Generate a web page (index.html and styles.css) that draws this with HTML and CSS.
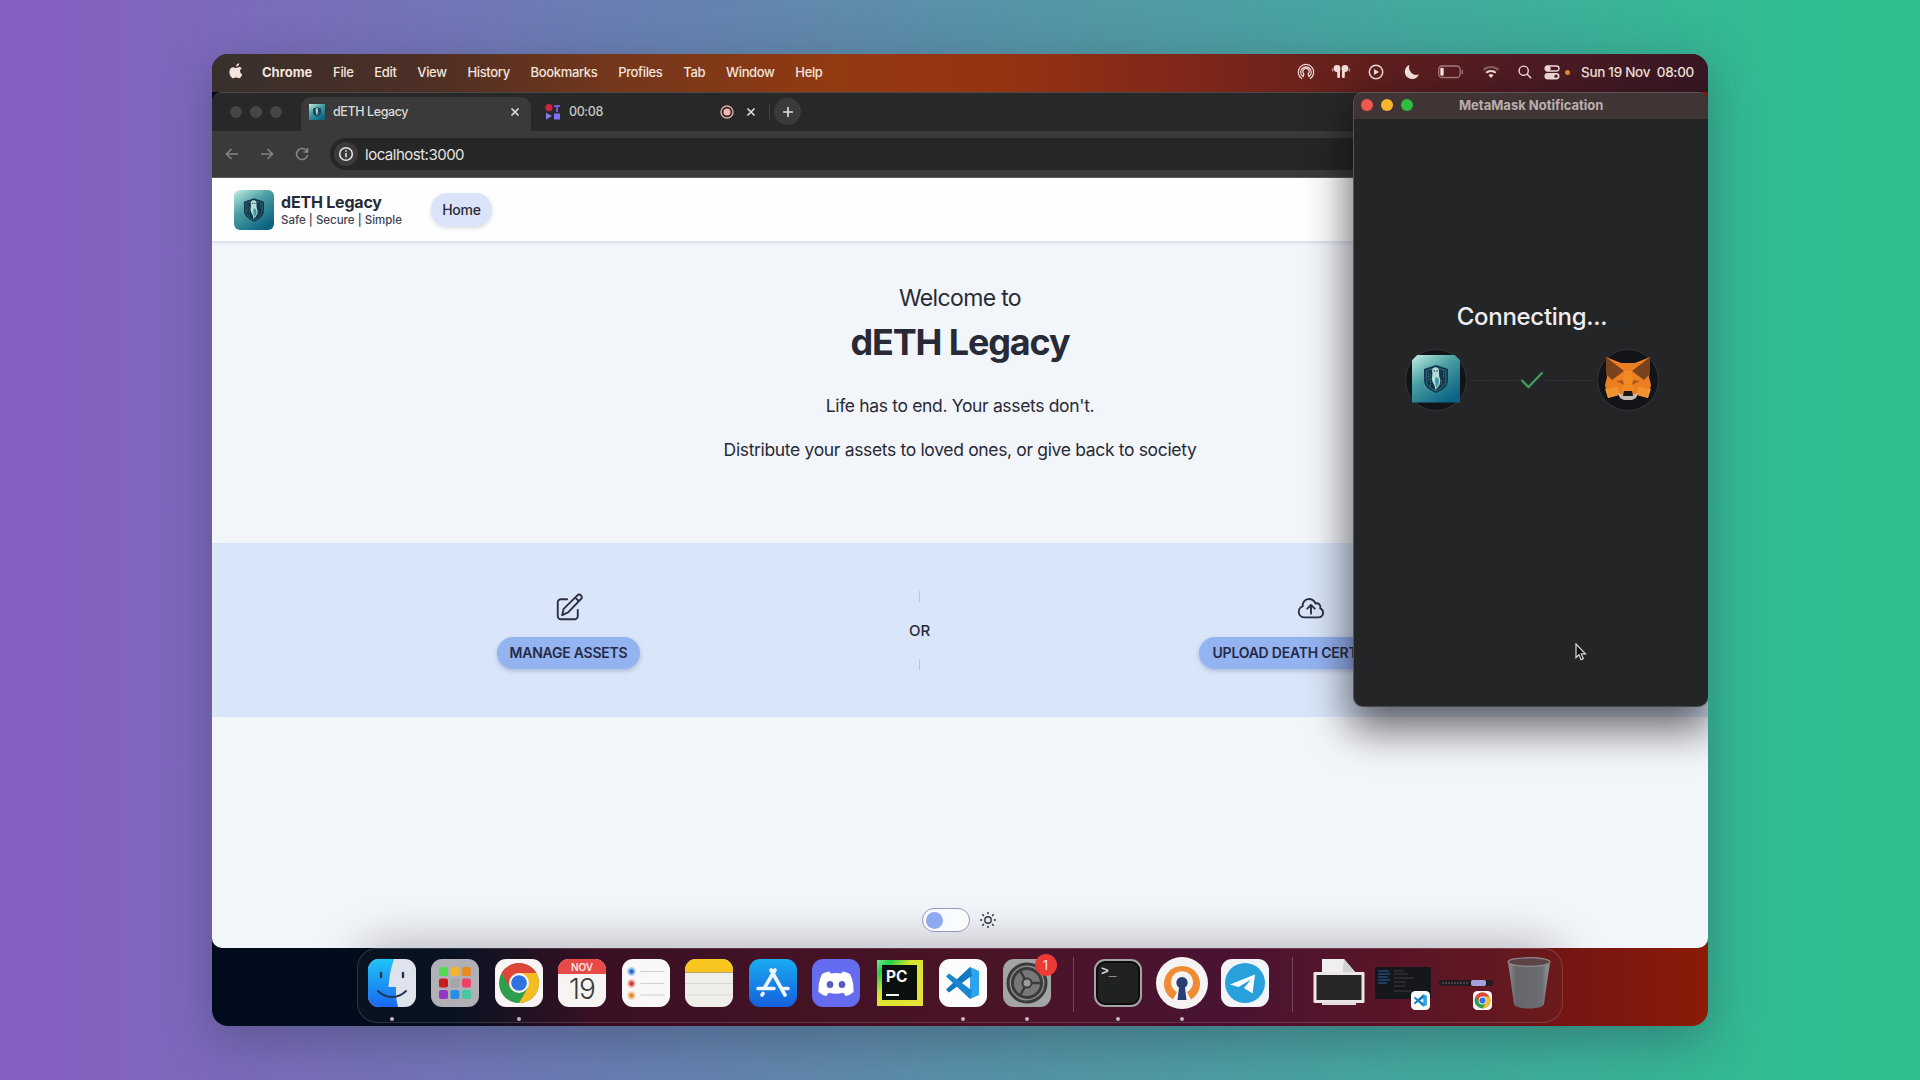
FILE: index.html
```html
<!DOCTYPE html>
<html lang="en">
<head>
  <meta charset="UTF-8" />
  <meta name="viewport" content="width=device-width, initial-scale=1.0"/>
  <title>dETH Legacy</title>
  <link rel="stylesheet" href="styles.css">
</head>
<body>
  <!-- Shared icons -->
  <svg class="sprite" aria-hidden="true">
    <defs>
      <linearGradient id="teal" x1="0" y1="0" x2="0.7" y2="1">
        <stop offset="0" stop-color="#c3efe4"/>
        <stop offset="0.45" stop-color="#4a9fa3"/>
        <stop offset="1" stop-color="#0c6384"/>
      </linearGradient>
      <linearGradient id="finder-blue" x1="0" y1="0" x2="0" y2="1">
        <stop offset="0" stop-color="#1fc4f8"/>
        <stop offset="1" stop-color="#1a68f0"/>
      </linearGradient>
      <linearGradient id="store-blue" x1="0" y1="0" x2="0" y2="1">
        <stop offset="0" stop-color="#1aabf2"/>
        <stop offset="1" stop-color="#1560dd"/>
      </linearGradient>
      <linearGradient id="trash-grey" x1="0" y1="0" x2="1" y2="0">
        <stop offset="0" stop-color="#8c8c8f"/>
        <stop offset="0.2" stop-color="#66676a"/>
        <stop offset="0.8" stop-color="#6c6d70"/>
        <stop offset="1" stop-color="#98999b"/>
      </linearGradient>
    </defs>
    <symbol id="shield" viewBox="0 0 48 48">
      <rect width="48" height="48" fill="url(#teal)"/>
      <path d="M24 10l12 4v11c0 6-5 10-12 13-7-3-12-7-12-13V14z" fill="#12364a"/>
      <path d="M24 12.500l9.800 3.300v9c0 5-4 8.500-9.800 11.200-5.800-2.700-9.800-6.200-9.800-11.200v-9z" fill="none" stroke="#3f7f8c" stroke-width="0.800"/>
      <path d="M16.500 18v8M18.500 20v11M31.500 17v5M29.500 25v6" stroke="#39717f" stroke-width="0.900" stroke-dasharray="2 1"/>
      <path d="M20 16c0-5 7-5 7 0 0 3 0 5 1 8 1 4-1 8-5 11 1-4-2-6-3-10-.5-3 1-5 0-9z" fill="#b5dcd8"/>
      <path d="M24 22c4 1 4 7 0 11 0-4-2-7 0-11z" fill="#3e98a3"/>
      <circle cx="22.300" cy="16" r="0.800" fill="#12364a"/><circle cx="25" cy="16" r="0.800" fill="#12364a"/>
    </symbol>
    <symbol id="chrome" viewBox="0 0 48 48">
      <rect width="48" height="48" rx="11" fill="#faf5f4"/>
      <circle cx="24" cy="24" r="20" fill="#2f9e4c"/>
      <path d="M6.700 14A20 20 0 0 1 41.300 14H24L15.300 29z" fill="#e0453a"/>
      <path d="M41.300 14A20 20 0 0 1 24 44L32.700 29 24 14z" fill="#f6bd22"/>
      <circle cx="24" cy="24" r="10" fill="#f5f5f5"/>
      <circle cx="24" cy="24" r="7.800" fill="#2f72e0"/>
    </symbol>
    <symbol id="vscode" viewBox="0 0 48 48">
      <rect width="48" height="48" rx="11" fill="#fcfcfd"/>
      <path d="M31 8l9 4v24l-9 4z" fill="#2ca3ec"/>
      <path d="M31 8L7 30.500l3 3L33 16.500z" fill="#1277bd"/>
      <path d="M7 17.500l3-3L33 31.500 31 40z" fill="#1a86cf"/>
    </symbol>
  </svg>

  <div class="screen">
    <div class="menubar">
      <svg class="apple" viewBox="0 0 14 17"><path d="M10.200.3c.1 1.600-1.300 3.200-3 3.200C7 2 8.600.4 10.200.3zM12.600 5.600c-2.300 1.400-1.900 4.700.6 5.700-.6 1.900-1.900 4-3.300 4-1.100 0-1.500-.7-2.800-.7s-1.700.7-2.700.7C2.300 15.300.4 11.700.4 8.900c0-3 1.900-4.700 3.900-4.700 1.200 0 2 .8 2.900.8.900 0 1.900-.9 3.300-.9.9 0 1.700.5 2.100 1.500z"/></svg>
      <span class="menu app-name">Chrome</span>
      <span class="menu">File</span>
      <span class="menu">Edit</span>
      <span class="menu">View</span>
      <span class="menu">History</span>
      <span class="menu">Bookmarks</span>
      <span class="menu">Profiles</span>
      <span class="menu">Tab</span>
      <span class="menu">Window</span>
      <span class="menu">Help</span>
      <div class="status">
        <svg class="s-vpn" width="18" height="18" viewBox="0 0 18 18"><path d="M5 15.700a7.700 7.700 0 1 1 8 0M6 13.500l.9-2.600a3.200 3.200 0 1 1 4.200 0l.9 2.600a5.300 5.300 0 1 0-6 0z" stroke-width="1.200"/></svg>
        <svg class="s-pods" width="20" height="16" viewBox="0 0 20 16"><g fill="#f2dcd8" stroke="none"><circle cx="6" cy="4.500" r="3.400"/><circle cx="14" cy="4.500" r="3.400"/><rect x="6.200" y="4" width="2.800" height="10" rx="1.200"/><rect x="11" y="4" width="2.800" height="10" rx="1.200"/></g><path d="M1.500 4.500v3M18.500 4.500v3" opacity="0.600"/></svg>
        <svg class="s-play" width="16" height="16" viewBox="0 0 16 16"><circle cx="8" cy="8" r="6.700" stroke-width="1.500"/><path d="M6 5l5 3-5 3z" fill="#f2dcd8" stroke="none"/></svg>
        <svg class="s-moon" width="16" height="16" viewBox="0 0 16 16"><path d="M5.500 1A7.300 7.300 0 1 0 15 10.300 7.300 7.300 0 0 1 5.500 1z" fill="#f8e4e0" stroke="none"/></svg>
        <svg class="s-batt" width="26" height="14" viewBox="0 0 26 14"><rect x="0.700" y="1" width="21.500" height="11.500" rx="3.500" opacity="0.500"/><rect x="2.300" y="2.800" width="3.400" height="8" rx="1.300" fill="#f8e4e0" stroke="none"/><path d="M24.300 5v4" opacity="0.500"/></svg>
        <svg class="s-wifi" width="18" height="14" viewBox="0 0 18 14"><path d="M1.500 5a10.800 10.800 0 0 1 15 0" opacity="0.350" stroke-width="2"/><path d="M4.200 7.800a7 7 0 0 1 9.600 0" stroke-width="2"/><path d="M9 13l-2.500-2.700a3.500 3.500 0 0 1 5 0z" fill="#f2dcd8" stroke="none"/></svg>
        <svg class="s-search" width="14" height="14" viewBox="0 0 14 14"><circle cx="5.700" cy="5.700" r="4.600" stroke-width="1.400"/><path d="M9.200 9.200l4 4" stroke-width="1.600"/></svg>
        <svg class="s-ctl" width="16" height="15" viewBox="0 0 16 15"><rect x="1" y="1" width="14" height="5" rx="2.500"/><circle cx="4" cy="3.500" r="2" fill="#f2dcd8"/><rect x="0.500" y="8" width="15" height="6.500" rx="3.200" fill="#f2dcd8" stroke="none"/><circle cx="12" cy="11.200" r="1.600" fill="#501d20" stroke="none"/></svg>
        <span class="mic-dot"></span>
        <span class="clock">Sun 19 Nov&nbsp; 08:00</span>
      </div>
    </div>

    <div class="browser">
      <div class="tabstrip">
        <div class="lights"><span></span><span></span><span></span></div>
        <div class="tab active">
          <svg class="favicon" width="16" height="16"><use href="#shield"/></svg>
          <span class="tab-title">dETH Legacy</span>
          <svg class="close" width="10" height="10" viewBox="0 0 10 10"><path d="M1.500 1.500l7 7M8.500 1.500l-7 7"/></svg>
        </div>
        <div class="tab">
          <svg class="favicon" width="16" height="16" viewBox="0 0 16 16"><circle cx="4" cy="3.600" r="3.600" fill="#cf2440"/><path d="M9 1h6v2h-2v5h-2V3H9z" fill="#6d5fd0"/><path d="M1 8.800l6 3.300-6 3.400z" fill="#8a7df0"/><rect x="9" y="9.500" width="6" height="6" fill="#7d70f2"/></svg>
          <span class="tab-title">00:08</span>
          <svg class="rec" width="14" height="14" viewBox="0 0 14 14"><circle cx="7" cy="7" r="6" fill="none" stroke="#e0aaa8" stroke-width="1.400"/><circle cx="7" cy="7" r="3.600" fill="#f3b7b3"/></svg>
          <svg class="close" width="10" height="10" viewBox="0 0 10 10"><path d="M1.500 1.500l7 7M8.500 1.500l-7 7"/></svg>
        </div>
        <span class="tab-sep"></span>
        <div class="new-tab"><svg width="12" height="12" viewBox="0 0 12 12"><path d="M6 1v10M1 6h10"/></svg></div>
      </div>
      <div class="toolbar">
        <svg width="14" height="14" viewBox="0 0 14 14"><path d="M13 7H1.500M6.500 2l-5 5 5 5"/></svg>
        <svg width="14" height="14" viewBox="0 0 14 14"><path d="M1 7h11.500M7.500 2l5 5-5 5"/></svg>
        <svg width="14" height="14" viewBox="0 0 14 14"><path d="M12 4.500A5.500 5.500 0 1 0 12.500 8M12.500 1v4h-4"/></svg>
        <div class="omnibox">
          <span class="site-info"><svg width="16" height="16" viewBox="0 0 16 16"><circle cx="8" cy="8" r="6.300"/><path d="M8 7v4.300M8 4.300v1.500"/></svg></span>
          <span>localhost:3000</span>
        </div>
      </div>

      <div class="page">
        <header class="site-header">
          <svg class="logo" width="40" height="40"><use href="#shield"/></svg>
          <div class="brand">
            <div class="brand-name">dETH Legacy</div>
            <div class="brand-tag">Safe | Secure | Simple</div>
          </div>
          <a class="nav-home">Home</a>
        </header>

        <section class="hero">
          <div class="welcome">Welcome to</div>
          <h1>dETH Legacy</h1>
          <p class="line-one">Life has to end. Your assets don't.</p>
          <p class="line-two">Distribute your assets to loved ones, or give back to society</p>
        </section>

        <section class="actions">
          <div class="action">
            <svg width="30" height="30" viewBox="0 0 24 24"><path d="M10.500 5H5.500A2.500 2.500 0 0 0 3 7.500v11A2.500 2.500 0 0 0 5.500 21h11a2.500 2.500 0 0 0 2.500-2.500v-5M6.500 17.700l1.200-5L18.700 1.900a1.900 1.900 0 0 1 2.900 0 1.900 1.900 0 0 1 0 2.900L11.300 15.500zM17 3.700l2.900 2.900"/></svg>
            <button class="btn">MANAGE ASSETS</button>
          </div>
          <div class="divider"><span class="bar"></span><span>OR</span><span class="bar"></span></div>
          <div class="action">
            <svg width="30" height="30" viewBox="0 0 24 24"><path d="M12 16.500V9.700M9 12.500l3-3 3 3M6.750 19.500a4.500 4.500 0 0 1-1.400-8.800 5.250 5.250 0 0 1 10.200-2.300 3 3 0 0 1 3.800 3.900A3.750 3.750 0 0 1 18 19.500z"/></svg>
            <button class="btn">UPLOAD DEATH CERTIFICATE</button>
          </div>
        </section>

        <footer class="theme-switch">
          <span class="toggle"><span class="knob"></span></span>
          <svg width="18" height="18" viewBox="0 0 18 18"><circle cx="9" cy="9" r="3.200"/><path d="M9 1v2.200M9 14.800V17M1 9h2.200M14.800 9H17M3.300 3.300l1.600 1.600M13.100 13.100l1.600 1.600M3.300 14.700l1.600-1.600M13.100 4.900l1.600-1.600"/></svg>
        </footer>
        <div class="dock-shade"></div>
      </div>
    </div>

    <div class="dock">
      <div class="app running">
        <svg viewBox="0 0 48 48"><rect width="48" height="48" rx="11" fill="#dfe3ec"/><path d="M11 0h15c-3 9-5 18-5.500 28H28c-.3 7 .4 14 2 20H11A11 11 0 0 1 0 37V11A11 11 0 0 1 11 0z" fill="url(#finder-blue)"/><path d="M13 14v4M35 14v4" stroke="#20344f" stroke-width="2.400" stroke-linecap="round"/><path d="M10 32c8 8 20 8 28 0" fill="none" stroke="#20344f" stroke-width="1.800" stroke-linecap="round"/></svg>
      </div>
      <div class="app">
        <svg viewBox="0 0 48 48"><rect width="48" height="48" rx="11" fill="#b1b0b7"/><rect x="8" y="8" width="9" height="9" rx="2" fill="#52dd50"/><rect x="19.500" y="8" width="9" height="9" rx="2" fill="#f3b32b"/><rect x="31" y="8" width="9" height="9" rx="2" fill="#ea8a25"/><rect x="8" y="19.500" width="9" height="9" rx="2" fill="#c71c1c"/><rect x="19.500" y="19.500" width="9" height="9" rx="2" fill="#a5a5a8"/><rect x="31" y="19.500" width="9" height="9" rx="2" fill="#ef4168"/><rect x="8" y="31" width="9" height="9" rx="2" fill="#9137c4"/><rect x="19.500" y="31" width="9" height="9" rx="2" fill="#2490e8"/><rect x="31" y="31" width="9" height="9" rx="2" fill="#46c79d"/></svg>
      </div>
      <div class="app running"><svg><use href="#chrome"/></svg></div>
      <div class="app calendar"><div class="month">NOV</div><div class="day">19</div></div>
      <div class="app">
        <svg viewBox="0 0 48 48"><rect width="48" height="48" rx="11" fill="#f9f8f7"/><path d="M18.500 12.500h24M18.500 24.500h24M18.500 36h24" stroke="#cfcfcd" stroke-width="1"/><g stroke-width="2"><circle cx="9.500" cy="12.500" r="3.200" fill="#2f66b8" stroke="#9cc5f7"/><circle cx="9.500" cy="24.500" r="3.200" fill="#c53a3a" stroke="#f3b1ae"/><circle cx="9.500" cy="36.500" r="3.200" fill="#d78a32" stroke="#f4cfa5"/></g></svg>
      </div>
      <div class="app">
        <svg viewBox="0 0 48 48"><rect width="48" height="48" rx="11" fill="#efeeea"/><path d="M0 13V11A11 11 0 0 1 11 0h26a11 11 0 0 1 11 11v2z" fill="#f8c61e"/><path d="M0 13.500h48" stroke="#b7a467" stroke-width="1"/><path d="M0 24.500h48M0 36h48" stroke="#d8d8d4" stroke-width="1"/></svg>
      </div>
      <div class="app">
        <svg viewBox="0 0 48 48"><rect width="48" height="48" rx="11" fill="url(#store-blue)"/><g stroke="#eef6ff" stroke-width="3.600" stroke-linecap="round"><path d="M26 11L16 28M22 11l14 25M9 29.500h16M33 29.500h6M14 34.500l-1 1.500"/></g></svg>
      </div>
      <div class="app">
        <svg viewBox="0 0 48 48"><rect width="48" height="48" rx="11" fill="#656cf0"/><path d="M17 12.500l2 2q5-1 10 0l2-2q4 .5 7 2.500 4 8 3.500 18-4 3.500-8 4l-2-3.300q-7.500 2-15 0l-2 3.300q-4-.5-8-4-.5-10 3.500-18 3-2 7-2.500z" fill="#fff"/><ellipse cx="18" cy="25.500" rx="3.300" ry="3.600" fill="#555cc4"/><ellipse cx="30" cy="25.500" rx="3.300" ry="3.600" fill="#555cc4"/></svg>
      </div>
      <div class="app pycharm"><div class="py-inner"><span>PC</span><i></i></div></div>
      <div class="app running"><svg><use href="#vscode"/></svg></div>
      <div class="app running">
        <svg viewBox="0 0 48 48"><rect width="48" height="48" rx="11" fill="#a3a4a4"/><circle cx="24" cy="24" r="19" fill="#8b8b8b" stroke="#3a3b3d" stroke-width="3"/><circle cx="24" cy="24" r="14.500" fill="#777" stroke="#3a3b3d" stroke-width="3"/><path d="M24 24h14M24 24l-7-12.500M24 24l-7 12.500" stroke="#3a3b3d" stroke-width="2.500"/><circle cx="24" cy="24" r="4.500" fill="#9b9b9b" stroke="#3a3b3d" stroke-width="2"/></svg>
        <span class="badge">1</span>
      </div>
      <span class="sep"></span>
      <div class="app running terminal"><span>&gt;_</span></div>
      <div class="app running">
        <svg class="vpn" viewBox="0 0 52 52"><circle cx="26" cy="26" r="26" fill="#f6f3f3"/><path d="M17 42.500A18 18 0 1 1 35 42.500l-4-7.500a11 11 0 1 0-10 0z" fill="#ef8b33"/><path d="M21.500 43l1.500-12.500a5.700 5.700 0 1 1 6 0L30.500 43z" fill="#2a3d77"/></svg>
      </div>
      <div class="app">
        <svg viewBox="0 0 48 48"><rect width="48" height="48" rx="11" fill="#f3f4f7"/><circle cx="24" cy="24" r="20" fill="#28a0dc"/><path d="M9 25.500L34 15.500l-2.500 19-8.500-5.500 7-8.500-12.500 7.500z" fill="#fff"/></svg>
      </div>
      <span class="sep"></span>
      <div class="mini printer">
        <svg width="52" height="48" viewBox="0 0 52 48"><path d="M9 0h22l11 13v5H9z" fill="#efefef"/><path d="M31 0l-1.500 13H42z" fill="#d2d2d2"/><rect x="0.500" y="13" width="51" height="31" rx="1" fill="#ece6e8"/><rect x="3.500" y="16" width="45" height="25" fill="#262624"/><rect x="9" y="43" width="34" height="3" fill="#e4dcdf"/></svg>
      </div>
      <div class="mini thumb">
        <svg width="56" height="32" viewBox="0 0 56 32"><rect width="56" height="32" rx="1" fill="#15171b"/><path d="M3 4h11M3 7h12M3 10h10M3 13h12M3 16h9" stroke="#24477c" stroke-width="1.500"/><path d="M19 4h10M19 7h14M19 11h20M19 15h12M19 19h11M19 24h18" stroke="#3c3f46" stroke-width="1"/></svg>
        <svg class="corner"><use href="#vscode"/></svg>
      </div>
      <div class="mini thumb bar-thumb">
        <svg width="54" height="6" viewBox="0 0 54 6"><rect width="54" height="6" rx="2" fill="#231c22"/><path d="M3 3h27" stroke="#71636b" stroke-width="1" stroke-dasharray="2 1"/><rect x="32" width="15" height="6" rx="2" fill="#a5a1dd"/></svg>
        <svg class="corner"><use href="#chrome"/></svg>
      </div>
      <div class="mini trash">
        <svg width="44" height="52" viewBox="0 0 44 52"><path d="M1 5l6 42c1 6 29 6 30 0l6-42z" fill="url(#trash-grey)"/><ellipse cx="22" cy="5" rx="21" ry="4.300" fill="#5c4448" stroke="#8f8b8d" stroke-width="1.200"/></svg>
      </div>
    </div>

    <div class="metamask">
      <div class="mm-title">
        <div class="mm-lights"><span class="red"></span><span class="yellow"></span><span class="green"></span></div>
        <span class="mm-name">MetaMask Notification</span>
      </div>
      <div class="mm-body">
        <div class="connecting">Connecting...</div>
        <div class="mm-row">
          <div class="circle"><svg class="site" width="48" height="48"><use href="#shield"/></svg></div>
          <span class="dash"></span>
          <svg class="check" width="24" height="18" viewBox="0 0 24 18"><path d="M1.500 9l7 7L22.500 1.500" fill="none" stroke="#3f9b57" stroke-width="2.400"/></svg>
          <span class="dash"></span>
          <div class="circle">
            <svg width="48" height="46" viewBox="0 0 48 46">
              <path d="M2 1l15 6h14L46 1l-1 20 2 8-3 13-11-3-4 4H19l-4-4-11 3L1 29l2-8z" fill="#ec7f22"/>
              <path d="M2 1l18 14-12 9-6-6zM46 1L28 15l12 9 6-6z" fill="#7a411d"/>
              <path d="M20 15h8l2 20H18z" fill="#f28a22"/>
              <path d="M12 25l7-1 1 5zM36 25l-7-1-1 5z" fill="#b0561f"/>
              <path d="M1 33l13-2 1 8-11 3zM47 33l-13-2-1 8 11 3z" fill="#ef9330"/>
              <path d="M14 37l6 2h8l6-2-2 5-4 2h-8l-4-2z" fill="#c7bbb2"/>
              <path d="M20 35h8l1 5H19z" fill="#15171b"/>
            </svg>
          </div>
        </div>
      </div>
    </div>

    <svg class="cursor" width="12" height="19" viewBox="0 0 12 19"><path d="M1 1v13.500l3-2.800 2 5 2.300-1-2-4.800h4.200z" fill="#111" stroke="#dcdcdc" stroke-width="1.200"/></svg>
  </div>
</body>
</html>
```
FILE: styles.css
```css
* {
  margin: 0;
  padding: 0;
  box-sizing: border-box;
}

body {
  width: 1920px;
  height: 1080px;
  overflow: hidden;
  padding: 54px 212px;
  background: linear-gradient(90deg, #8561c1 3%, #2ebf91 96%);
  font-family: 'Inter', 'Liberation Sans', sans-serif;
}

.sprite {
  position: absolute;
  width: 0;
  height: 0;
}

.screen {
  position: relative;
  display: flex;
  flex-direction: column;
  width: 1496px;
  height: 972px;
  border-radius: 16px;
  overflow: hidden;
  background: linear-gradient(90deg, #000c1b 0, #000c1b 16%, #3b0a20 26%, #4c0e22 50%, #4c0d30 68%, #67121c 85%, #8c1b06 100%);
}

body::before {
  content: '';
  position: absolute;
  left: 212px;
  top: 54px;
  width: 1496px;
  height: 972px;
  border-radius: 16px;
  box-shadow: 0 14px 50px rgba(40, 50, 70, 0.38);
}

/* Menu bar */
.menubar {
  display: flex;
  align-items: center;
  height: 38px;
  padding: 0 14px 2px 17px;
  background: linear-gradient(90deg, #38302c 0, #4d2f25 14%, #74371c 27%, #933a11 42%, #963311 52%, #80271a 65%, #5f1f1e 78%, #4b1b25 90%, #371823 100%);
  color: #f3e4dc;
  font-size: 14px;
}

.apple {
  width: 14px;
  height: 17px;
  margin-right: 19px;
  margin-top: -2px;
  fill: #f3e4dc;
}

.menu {
  font-size: 13px;
  font-weight: 500;
  letter-spacing: -0.35px;
  margin-right: 20.8px;
}

.app-name {
  font-weight: 700;
  letter-spacing: 0;
}

.status {
  display: flex;
  align-items: center;
  margin-left: auto;
}

.status svg {
  fill: none;
  stroke: #f2dcd8;
  stroke-width: 1.3;
}

.s-vpn { margin-right: 16px; }
.s-pods { margin-right: 17px; }
.s-play { margin-right: 20px; }
.s-moon { margin-right: 18px; }
.s-batt { margin-right: 18px; }
.s-wifi { margin-right: 18px; }
.s-search { margin-right: 12px; }
.s-ctl { margin-right: 5px; }

.mic-dot {
  width: 5px;
  height: 5px;
  border-radius: 50%;
  background: #e58b26;
  margin-right: 11px;
}

.clock {
  font-size: 13.5px;
  font-weight: 500;
  letter-spacing: -0.3px;
  width: 113px;
  white-space: nowrap;
}

/* Browser */
.browser {
  display: flex;
  flex-direction: column;
  height: 856px;
  border-radius: 10px;
  overflow: hidden;
  border-top: 1px solid #4c4a48;
  background: #393a39;
}

.tabstrip {
  display: flex;
  align-items: flex-end;
  height: 38px;
  background: #272827;
  padding-left: 18px;
}

.lights {
  display: flex;
  gap: 8px;
  width: 71px;
  padding-bottom: 13px;
}

.lights span {
  width: 12px;
  height: 12px;
  border-radius: 50%;
  background: #454645;
}

.tab {
  display: flex;
  align-items: center;
  width: 230px;
  height: 34px;
  padding: 0 11px 5px 8px;
  color: #c6c6c4;
}

.tab.active {
  background: #393a39;
  border-radius: 10px 10px 0 0;
  color: #dcdcda;
}

.tab-title {
  margin-left: 8px;
  font-weight: 500;
  font-size: 12.5px;
  letter-spacing: -0.4px;
}

.tab .close {
  margin-left: auto;
}

.rec {
  margin-left: auto;
}

.tab .rec + .close {
  margin-left: 12px;
}

.tab + .tab {
  width: 228px;
  padding-left: 14px;
  padding-right: 3px;
}

.close path,
.new-tab path {
  fill: none;
  stroke: #dcdcda;
  stroke-width: 1.7;
}

.tab-sep {
  width: 1px;
  height: 16px;
  margin: 0 4px 11px 10px;
  background: #40413f;
}

.new-tab {
  display: flex;
  align-items: center;
  justify-content: center;
  width: 27px;
  height: 27px;
  margin-bottom: 6px;
  border-radius: 50%;
  background: #393a39;
}

.toolbar {
  display: flex;
  align-items: center;
  height: 47px;
  padding: 0 0 0 13px;
  border-bottom: 1px solid #555654;
}

.toolbar > svg {
  fill: none;
  stroke: #848583;
  stroke-width: 1.6;
  margin-right: 21px;
}

.omnibox {
  display: flex;
  align-items: center;
  flex: 1;
  height: 32px;
  padding-left: 4px;
  border-radius: 16px 0 0 16px;
  background: #252625;
  color: #e4e4e2;
  font-size: 15px;
  letter-spacing: -0.5px;
  gap: 7px;
}

.site-info {
  display: flex;
  align-items: center;
  justify-content: center;
  width: 24px;
  height: 24px;
  border-radius: 50%;
  background: #393a39;
}

.site-info svg {
  fill: none;
  stroke: #e4e4e2;
  stroke-width: 1.6;
}

/* Page */
.page {
  position: relative;
  display: flex;
  flex-direction: column;
  flex: 1;
  background: #f2f5f9;
  color: #282a37;
}

.site-header {
  display: flex;
  align-items: center;
  height: 64px;
  padding-left: 22px;
  background: #fdfefd;
  border-bottom: 1px solid #e0e2f3;
  box-shadow: 0 1px 3px rgba(150, 155, 220, 0.3);
}

.logo {
  border-radius: 6px;
}

.brand {
  margin-left: 7px;
  padding-top: 2px;
  width: 122px;
  white-space: nowrap;
}

.brand-name {
  font-size: 16px;
  font-weight: 700;
  line-height: 18px;
  letter-spacing: -0.2px;
}

.brand-tag {
  font-size: 11.5px;
  line-height: 18px;
  font-weight: 500;
  color: #414350;
}

.nav-home {
  margin-left: 28px;
  width: 61px;
  height: 33px;
  border-radius: 17px;
  background: #dbe3f8;
  box-shadow: 0 2px 4px rgba(80, 90, 140, 0.22);
  font-size: 14px;
  font-weight: 500;
  letter-spacing: -0.2px;
  line-height: 33px;
  text-align: center;
}

.hero {
  height: 301px;
  padding-top: 41px;
  text-align: center;
}

.welcome {
  font-size: 23px;
  line-height: 30px;
  letter-spacing: -0.65px;
}

.hero h1 {
  margin-top: 7px;
  font-size: 36px;
  line-height: 44px;
  letter-spacing: -1.15px;
}

.hero p {
  font-size: 17.5px;
  line-height: 28px;
  letter-spacing: -0.34px;
}

.hero .line-one {
  margin-top: 28px;
}

.hero .line-two {
  margin-top: 16px;
}

.actions {
  display: flex;
  align-items: center;
  justify-content: space-between;
  height: 174px;
  padding: 0 286px 0 285px;
  background: #d9e5f8;
}

.action {
  display: flex;
  flex-direction: column;
  align-items: center;
  gap: 14px;
  padding-top: 1px;
}

.action:first-child {
  width: 143px;
}

.action:last-child {
  width: 223px;
}

.action svg {
  fill: none;
  stroke: #2b2f40;
  stroke-width: 1.5;
  stroke-linecap: round;
  stroke-linejoin: round;
}

.btn {
  width: 100%;
  height: 32px;
  border: none;
  border-radius: 16px;
  background: #94b3f1;
  box-shadow: 0 2px 4px rgba(70, 90, 150, 0.3);
  color: #252b45;
  font-family: inherit;
  font-size: 14px;
  font-weight: 600;
  letter-spacing: -0.23px;
  white-space: nowrap;
}

.divider {
  display: flex;
  flex-direction: column;
  align-items: center;
  gap: 19px;
  width: 22px;
  font-size: 15px;
  font-weight: 500;
  line-height: 19px;
}

.bar {
  width: 1px;
  height: 11px;
  background: #bdc6d8;
}

.theme-switch {
  display: flex;
  align-items: center;
  gap: 9px;
  margin: auto 0 16px 710px;
  z-index: 2;
}

.toggle {
  width: 48px;
  height: 24px;
  padding: 2.5px 3px;
  border: 1px solid #9298c8;
  border-radius: 12px;
  background: #fafbfd;
}

.knob {
  display: block;
  width: 17px;
  height: 17px;
  border-radius: 50%;
  background: #8eaaf0;
}

.theme-switch svg {
  fill: none;
  stroke: #30323f;
  stroke-width: 1.4;
}

.dock-shade {
  position: absolute;
  left: 155px;
  bottom: -36px;
  width: 1186px;
  height: 30px;
  border-radius: 24px;
  box-shadow: 0 0 48px 6px rgba(20, 15, 25, 0.34);
}

/* Dock */
.dock {
  display: flex;
  align-items: center;
  width: 1206px;
  height: 75px;
  margin-left: 145px;
  padding: 0 0 6px 9.5px;
  border: 1px solid rgba(255, 255, 255, 0.15);
  border-radius: 20px;
  background: rgba(60, 60, 70, 0.13);
}

.app {
  position: relative;
  flex: none;
  width: 48px;
  height: 48px;
  margin-right: 15.5px;
}

.app > svg {
  display: block;
  width: 48px;
  height: 48px;
}

.app .vpn {
  width: 52px;
  height: 52px;
  margin: -2px;
}

.running::after {
  content: '';
  position: absolute;
  left: 22px;
  top: 58px;
  width: 4px;
  height: 4px;
  border-radius: 50%;
  background: #c9b3bb;
}

.calendar {
  border-radius: 11px;
  overflow: hidden;
  background: #f6f5f3;
  text-align: center;
}

.month {
  height: 15px;
  background: #e84b47;
  color: #fbe3e0;
  font-size: 10px;
  font-weight: 600;
  line-height: 17px;
}

.day {
  color: #3b3b3b;
  font-size: 28px;
  font-weight: 300;
  line-height: 31px;
  letter-spacing: -1px;
}

.pycharm {
  display: flex;
  align-items: center;
  justify-content: center;
  background: linear-gradient(135deg, #7fe8a0 0, #26d048 18%, #d8e62c 40%, #ece13f 100%);
  background-clip: content-box;
  padding: 1px;
}

.py-inner {
  width: 35px;
  height: 35px;
  padding: 3px 4px;
  background: #0a100b;
  color: #f2f2f2;
  font-size: 15.5px;
  font-weight: 700;
  line-height: 18px;
}

.py-inner i {
  display: block;
  width: 13px;
  height: 2px;
  margin-top: 8px;
  background: #f2f2f2;
}

.badge {
  position: absolute;
  right: -6px;
  top: -5px;
  width: 22px;
  height: 22px;
  border-radius: 50%;
  background: #ec3a36;
  color: #fbe0de;
  font-size: 13px;
  line-height: 22px;
  text-align: center;
}

.sep {
  flex: none;
  width: 1px;
  height: 55px;
  margin: 4px 20px 0 7px;
  background: rgba(255, 255, 255, 0.22);
}

.terminal {
  border: 2px solid #a5a3a6;
  border-radius: 11px;
  background: #202221;
  box-shadow: inset 0 0 0 2px #0c0c0c;
  padding: 3px 0 0 5px;
  color: #dadada;
  font-family: 'Liberation Mono', monospace;
  font-size: 13px;
  font-weight: 700;
}

.terminal::after {
  left: 20px;
  top: 56px;
}

.mini {
  position: relative;
  display: flex;
  flex: none;
}

.printer {
  margin-right: 10px;
}

.thumb {
  align-items: center;
  height: 48px;
  margin-right: 8px;
}

.bar-thumb {
  margin-right: 14px;
}

.corner {
  position: absolute;
  right: 1px;
  bottom: -3px;
  width: 19px;
  height: 19px;
}

/* MetaMask popup window */
.metamask {
  position: absolute;
  left: 1141px;
  top: 38px;
  width: 355px;
  height: 615px;
  border-radius: 10px;
  overflow: hidden;
  background: #242527;
  border: 1px solid #5a5556;
  border-right: none;
  border-bottom-color: #454648;
  box-shadow: 0 18px 42px 4px rgba(10, 5, 10, 0.6);
}

.mm-title {
  display: flex;
  align-items: center;
  height: 26px;
  padding: 0 0 2px 7px;
  background: #403534;
}

.mm-lights {
  display: flex;
  gap: 8px;
  width: 98px;
}

.mm-lights span {
  width: 12px;
  height: 12px;
  border-radius: 50%;
}

.red { background: #f0564f; }
.yellow { background: #f5b52d; }
.green { background: #2cbd42; }

.mm-name {
  color: #b9aead;
  font-size: 13px;
  font-weight: 700;
}

.mm-body {
  display: flex;
  flex-direction: column;
  align-items: center;
  padding: 182px 0 0 2px;
}

.connecting {
  color: #eeeef0;
  font-size: 24px;
  font-weight: 500;
  line-height: 32px;
  letter-spacing: -0.3px;
}

.mm-row {
  display: flex;
  align-items: center;
  margin-top: 16px;
}

.circle {
  display: flex;
  align-items: center;
  justify-content: center;
  width: 62px;
  height: 62px;
  border: 1px solid #333538;
  border-radius: 50%;
  background: #121417;
}

.circle .site {
  clip-path: polygon(12% 0, 88% 0, 100% 12%, 100% 100%, 0 100%, 0 12%);
}

.circle svg {
  margin-top: -3px;
}

.dash {
  width: 47px;
  margin: 0 4px;
  border-top: 1px dashed #333538;
}

.check {
  margin: 0 -2px;
}

.cursor {
  position: absolute;
  left: 1363px;
  top: 589px;
}
```
